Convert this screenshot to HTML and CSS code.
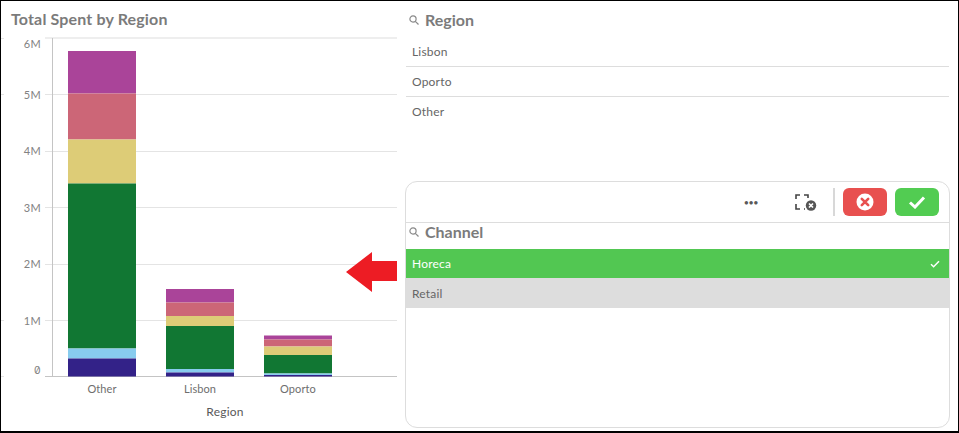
FILE: index.html
```html
<!DOCTYPE html>
<html lang="en">
<head>
<meta charset="utf-8">
<title>Total Spent by Region</title>
<link rel="stylesheet" href="styles.css">
</head>
<body>
<div class="page">
  <section class="chart-pane">
    <h2 class="chart-title">Total Spent by Region</h2>
    <svg class="chart" width="404" height="412" viewBox="0 0 404 412">
      <g class="grid">
        <line class="grid-top" x1="44" x2="396" y1="37" y2="37"/>
        <line x1="44" x2="396" y1="93.5" y2="93.5"/>
        <line x1="44" x2="396" y1="150.5" y2="150.5"/>
        <line x1="44" x2="396" y1="206.5" y2="206.5"/>
        <line x1="44" x2="396" y1="263.5" y2="263.5"/>
        <line x1="44" x2="396" y1="319.5" y2="319.5"/>
        <line x1="0" x2="3" y1="37.5" y2="37.5"/>
        <line x1="0" x2="3" y1="93.5" y2="93.5"/>
        <line x1="0" x2="3" y1="319.5" y2="319.5"/>
        <line x1="0" x2="3" y1="375.5" y2="375.5"/>
      </g>
      <g class="axis">
        <line x1="51.5" x2="51.5" y1="37" y2="376"/>
        <line x1="44" x2="396" y1="375.5" y2="375.5"/>
      </g>
      <g class="ticks">
        <text x="40" y="47">6M</text>
        <text x="40" y="98">5M</text>
        <text x="40" y="154">4M</text>
        <text x="40" y="211">3M</text>
        <text x="40" y="267">2M</text>
        <text x="40" y="324">1M</text>
        <text class="zero" x="40" y="373">0</text>
      </g>
      <g class="bars">
        <rect class="s1" x="67" y="50" width="68" height="42.5"/>
        <rect class="s2" x="67" y="92.5" width="68" height="46"/>
        <rect class="s3" x="67" y="138.5" width="68" height="44"/>
        <rect class="s4" x="67" y="182.5" width="68" height="165"/>
        <rect class="s5" x="67" y="347.5" width="68" height="10"/>
        <rect class="s6" x="67" y="357.5" width="68" height="18"/>
        <rect class="s1" x="165" y="288" width="68" height="13.5"/>
        <rect class="s2" x="165" y="301.5" width="68" height="13.5"/>
        <rect class="s3" x="165" y="315" width="68" height="10"/>
        <rect class="s4" x="165" y="325" width="68" height="43"/>
        <rect class="s5" x="165" y="368" width="68" height="3.5"/>
        <rect class="s6" x="165" y="371.5" width="68" height="4"/>
        <rect class="s1" x="263" y="334.5" width="68" height="4"/>
        <rect class="s2" x="263" y="338.5" width="68" height="7"/>
        <rect class="s3" x="263" y="345.5" width="68" height="8.5"/>
        <rect class="s4" x="263" y="354" width="68" height="18.5"/>
        <rect class="s5" x="263" y="372.5" width="68" height="1.5"/>
        <rect class="s6" x="263" y="374" width="68" height="1.5"/>
      </g>
      <g class="cats">
        <text x="101" y="392">Other</text>
        <text x="199" y="392">Lisbon</text>
        <text x="297" y="392">Oporto</text>
      </g>
      <text class="axis-title" x="224" y="415">Region</text>
    </svg>
  </section>

  <section class="filters">
    <div class="region-box">
      <div class="lb-head">
        <svg class="search" width="10" height="10" viewBox="0 0 10 10"><circle cx="4" cy="4" r="3.1"/><line x1="6.300" y1="6.300" x2="9.500" y2="9.500"/></svg>
        <h3>Region</h3>
      </div>
      <ul class="rows">
        <li>Lisbon</li>
        <li>Oporto</li>
        <li>Other</li>
      </ul>
    </div>

    <div class="channel-box">
      <div class="toolbar">
        <span class="dots">•••</span>
        <svg class="clear-icon" width="22" height="20" viewBox="0 0 22 20">
          <path class="marq" d="M1 7V3h4M9 3h4v3M1 12v5h4M9 17h1"/>
          <circle class="x-bg" cx="16" cy="13.500" r="5.200"/>
          <path class="x-mark" d="M14 11.500l4 4M18 11.500l-4 4"/>
        </svg>
        <span class="sep"></span>
        <button class="btn btn-cancel" type="button" aria-label="Cancel">
          <svg width="18" height="18" viewBox="0 0 18 18"><circle cx="9" cy="9" r="8.500" fill="#fff"/><path d="M5.800 5.800l6.400 6.400M12.200 5.800l-6.400 6.400" stroke="#e8504f" stroke-width="2.600" stroke-linecap="round"/></svg>
        </button>
        <button class="btn btn-ok" type="button" aria-label="Confirm">
          <svg width="18" height="14" viewBox="0 0 18 14"><path d="M2 7.500l5 4.500L16 2.500" fill="none" stroke="#fff" stroke-width="3"/></svg>
        </button>
      </div>
      <div class="lb-head channel-head">
        <svg class="search" width="10" height="10" viewBox="0 0 10 10"><circle cx="4" cy="4" r="3.1"/><line x1="6.300" y1="6.300" x2="9.500" y2="9.500"/></svg>
        <h3>Channel</h3>
      </div>
      <div class="opt opt-selected"><span>Horeca</span><svg width="10" height="8" viewBox="0 0 10 8"><path d="M1 4.300l2.600 2.400L9 1.200" fill="none" stroke="#fff" stroke-width="1.500"/></svg></div>
      <div class="opt opt-alt"><span>Retail</span></div>
    </div>
  </section>

  <svg class="arrow" width="52" height="40" viewBox="0 0 52 40"><path d="M0 20L26 0V9H51V29H26V40Z" fill="#ed1c24"/></svg>
</div>
</body>
</html>
```
FILE: styles.css
```css
* { box-sizing: border-box; }
html, body { margin: 0; padding: 0; background: #fff; }
body { font-family: "Lato", "Liberation Sans", sans-serif; }
.page {
  position: relative;
  width: 959px;
  height: 433px;
  display: flex;
  background: #fff;
  border-top: 1px solid #000;
  border-left: 1px solid #000;
  border-bottom: 2px solid #000;
  border-right: 1px solid #000;
  overflow: hidden;
}
.chart-pane { width: 404px; flex: none; }
.chart-title {
  margin: 0;
  height: 36px;
  padding: 9px 0 0 10px;
  font-size: 16px;
  line-height: 18px;
  font-weight: 700;
  letter-spacing: .15px;
  color: #7b7b7b;
}
.chart { display: block; margin-top: -36px; overflow: visible; }
.grid line { stroke: #e4e4e4; stroke-width: 1; }
.grid .grid-top { stroke: #eeeeee; stroke-width: 2; }
.axis line { stroke: #c4c4c4; stroke-width: 1; }
.ticks text { font-size: 11px; fill: #828282; text-anchor: end; letter-spacing: .3px; }
.ticks .zero { font-family: "Inter", sans-serif; font-feature-settings: "zero"; font-size: 10.500px; }
.cats text { font-size: 11px; fill: #6e6e6e; text-anchor: middle; letter-spacing: .1px; }
.axis-title { font-size: 12px; fill: #595959; text-anchor: middle; letter-spacing: .2px; }
.bars rect { stroke: none; }
.s1 { fill: #aa4499; }
.s2 { fill: #cc6677; }
.s3 { fill: #ddcc77; }
.s4 { fill: #117733; }
.s5 { fill: #88ccee; }
.s6 { fill: #332288; }

.filters { flex: 1; display: flex; flex-direction: column; padding-right: 8px; }
.region-box { height: 180px; padding: 0 1px; }
.lb-head { display: flex; align-items: center; gap: 6px; padding-left: 3px; }
.region-box .lb-head { height: 36px; padding-top: 1px; }
.lb-head h3 { margin: 0; font-size: 16px; line-height: 18px; font-weight: 700; color: #7b7b7b; }
.search circle, .search line { fill: none; stroke: #8a8a8a; stroke-width: 1.200; }
.rows { list-style: none; margin: 0; padding: 0; }
.rows li {
  height: 30px;
  padding: 7px 0 0 6px;
  font-size: 12px;
  line-height: 15px;
  color: #666;
  letter-spacing: .2px;
  border-bottom: 1px solid #ddd;
}
.rows li:nth-child(3) { border-bottom: 0; }

.channel-box {
  height: 247px;
  border: 1px solid #ddd;
  border-radius: 12px;
  background: #fff;
}
.toolbar {
  height: 41px;
  display: flex;
  align-items: center;
  justify-content: flex-end;
  gap: 8px;
  padding: 0 10px 0 0;
  border-bottom: 1px solid #ddd;
}
.dots { font-size: 9px; color: #595959; margin-right: 29px; letter-spacing: -.5px; }
.clear-icon { margin-right: 8px; }
.marq { fill: none; stroke: #444; stroke-width: 1.600; }
.x-bg { fill: #555; }
.x-mark { stroke: #fff; stroke-width: 1.700; fill: none; }
.sep { width: 2px; height: 28px; background: #d8d8d8; }
.btn {
  width: 44px;
  height: 28px;
  padding: 0;
  border: 0;
  border-radius: 6px;
  display: flex;
  align-items: center;
  justify-content: center;
}
.btn-cancel { background: #e8504f; }
.btn-ok { background: #52cc52; }
.channel-head { height: 26px; padding: 0 0 8px 3px; }
.opt {
  height: 30px;
  display: flex;
  align-items: center;
  justify-content: space-between;
  padding: 0 9px 0 6px;
  font-size: 12px;
  letter-spacing: .2px;
}
.opt-selected { height: 29px; background: #52c752; color: #fff; }
.opt-alt { background: #dddddd; color: #666; }
.arrow { position: absolute; left: 345px; top: 251px; }
```
